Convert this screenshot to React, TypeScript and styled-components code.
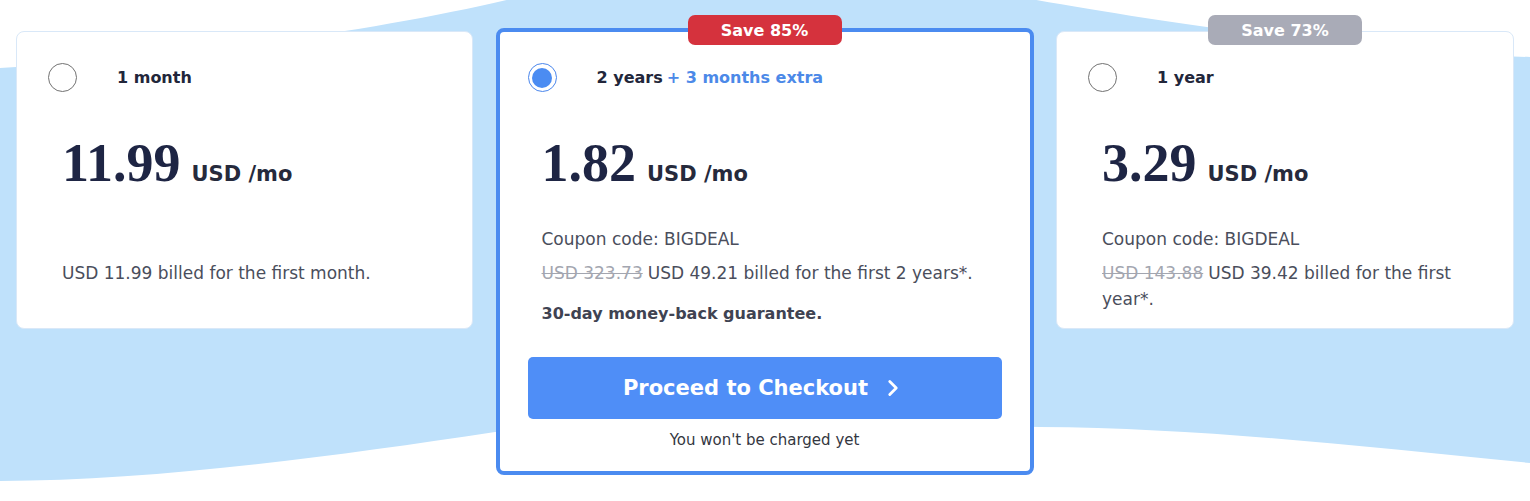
import React from 'react';
import styled, { createGlobalStyle } from 'styled-components';
import { ChevronRight } from 'lucide-react';

const SANS = `"DejaVu Sans", "Noto Sans", Arial, sans-serif`;
const SERIF = `"Liberation Serif", "DejaVu Serif", serif`;

const GlobalStyle = createGlobalStyle`
    * {
        box-sizing: border-box;
    }
    body {
        margin: 0;
        background: #ffffff;
        font-family: ${SANS};
        color: #222639;
    }
`;

const Page = styled.div`
    position: relative;
    width: 1530px;
    height: 501px;
    overflow: hidden;
    background: #ffffff;
`;

const Blob = styled.svg`
    position: absolute;
    left: 0;
    top: 0;
    width: 1530px;
    height: 501px;
    z-index: 0;
`;

const Plans = styled.div`
    position: relative;
    z-index: 1;
    display: flex;
    align-items: flex-start;
    justify-content: space-between;
    padding: 28px 16px 0;
`;

const Card = styled.div<{ $selected?: boolean; $width: number }>`
    position: relative;
    width: ${p => p.$width}px;
    height: ${p => (p.$selected ? 'auto' : '298px')};
    margin-top: ${p => (p.$selected ? '0' : '3px')};
    background: #ffffff;
    border: ${p => (p.$selected ? '4px solid #4b8bf0' : '1px solid #d9e8f8')};
    border-radius: 8px;
    padding: 31px ${p => (p.$selected ? '42px' : '45px')} 21px;
`;

const Badge = styled.div<{ $tone: 'red' | 'gray' }>`
    position: absolute;
    top: -17px;
    left: 50%;
    transform: translateX(-50%);
    width: 154px;
    height: 30px;
    border-radius: 7px;
    background: ${p => (p.$tone === 'red' ? '#d5323d' : '#a9abb7')};
    color: #ffffff;
    font-size: 16px;
    font-weight: 700;
    display: flex;
    align-items: center;
    justify-content: center;
`;

const Header = styled.label`
    display: flex;
    align-items: center;
    gap: 40px;
    margin-left: -14px;
    height: 29px;
    font-size: 16px;
    font-weight: 700;
    color: #22263a;
    cursor: pointer;
`;

const Radio = styled.span<{ $checked?: boolean }>`
    flex: none;
    width: 29px;
    height: 29px;
    border-radius: 50%;
    border: ${p => (p.$checked ? '1.5px solid #4a86ec' : '1px solid #727272')};
    display: flex;
    align-items: center;
    justify-content: center;
    &::after {
        content: '';
        display: ${p => (p.$checked ? 'block' : 'none')};
        width: 20px;
        height: 20px;
        border-radius: 50%;
        background: #4b8cf2;
    }
`;

const Extra = styled.span`
    color: #4c89e8;
    margin-left: 4px;
`;

const PriceRow = styled.div`
    display: flex;
    align-items: baseline;
    gap: 11px;
    margin-top: 44px;
    line-height: 54px;
`;

const Amount = styled.span`
    font-family: ${SERIF};
    font-size: 54px;
    font-weight: 700;
    color: #1e2544;
`;

const Unit = styled.span`
    font-size: 21px;
    font-weight: 700;
    color: #262a3c;
`;

const Details = styled.div`
    display: flex;
    flex-direction: column;
    gap: 8px;
    margin-top: 25px;
    font-size: 17px;
    line-height: 26px;
    color: #4a4e5c;
`;

const Line = styled.p<{ $hidden?: boolean }>`
    margin: 0;
    visibility: ${p => (p.$hidden ? 'hidden' : 'visible')};
`;

const OldPrice = styled.s`
    color: #a3a6b0;
    margin-right: 5px;
`;

const Guarantee = styled.p`
    margin: 7px 0 0;
    font-size: 16px;
    font-weight: 700;
    color: #3f4352;
`;

const CheckoutButton = styled.button`
    display: flex;
    align-items: center;
    justify-content: center;
    gap: 12px;
    width: calc(100% + 28px);
    height: 62px;
    margin: 30px 0 0 -14px;
    border: none;
    border-radius: 5px;
    background: #4f8ef7;
    color: #ffffff;
    font-family: ${SANS};
    font-size: 21px;
    font-weight: 700;
    cursor: pointer;
`;

const Note = styled.p`
    margin: 11px 0 0;
    text-align: center;
    font-size: 15px;
    line-height: 20px;
    color: #34373f;
`;

type Plan = {
    id: string;
    width: number;
    title: string;
    extra?: string;
    amount: string;
    badge?: { text: string; tone: 'red' | 'gray' };
    coupon?: string;
    oldPrice?: string;
    billed: string;
    selected?: boolean;
};

const plans: Plan[] = [
    {
        id: 'monthly',
        width: 457,
        title: '1 month',
        amount: '11.99',
        billed: 'USD 11.99 billed for the first month.',
    },
    {
        id: 'two-years',
        width: 538,
        title: '2 years',
        extra: '+ 3 months extra',
        amount: '1.82',
        badge: { text: 'Save 85%', tone: 'red' },
        coupon: 'BIGDEAL',
        oldPrice: 'USD 323.73',
        billed: 'USD 49.21 billed for the first 2 years*.',
        selected: true,
    },
    {
        id: 'yearly',
        width: 458,
        title: '1 year',
        amount: '3.29',
        badge: { text: 'Save 73%', tone: 'gray' },
        coupon: 'BIGDEAL',
        oldPrice: 'USD 143.88',
        billed: 'USD 39.42 billed for the first year*.',
    },
];

const PlanCard = ({ plan }: { plan: Plan }) => (
    <Card $selected={plan.selected} $width={plan.width}>
        {plan.badge && <Badge $tone={plan.badge.tone}>{plan.badge.text}</Badge>}
        <Header>
            <Radio $checked={plan.selected} />
            <span>
                {plan.title}
                {plan.extra && <Extra>{plan.extra}</Extra>}
            </span>
        </Header>
        <PriceRow>
            <Amount>{plan.amount}</Amount>
            <Unit>USD /mo</Unit>
        </PriceRow>
        <Details>
            <Line $hidden={!plan.coupon}>Coupon code: {plan.coupon ?? 'BIGDEAL'}</Line>
            <Line>
                {plan.oldPrice && <OldPrice>{plan.oldPrice}</OldPrice>}
                {plan.billed}
            </Line>
            {plan.selected && <Guarantee>30-day money-back guarantee.</Guarantee>}
        </Details>
        {plan.selected && (
            <>
                <CheckoutButton>
                    Proceed to Checkout
                    <ChevronRight size={26} strokeWidth={2.6} />
                </CheckoutButton>
                <Note>You won't be charged yet</Note>
            </>
        )}
    </Card>
);

const App = () => {
    return (
        <Page>
            <GlobalStyle />
            <Blob viewBox="0 0 1530 501" preserveAspectRatio="none">
                <path
                    fill="#bfe1fb"
                    d="M0,68 C190,58 390,28 515,-2 L1025,-2 C1150,20 1350,52 1530,57 L1530,463 C1360,446 1200,428 1040,427 C860,420 640,424 495,432 C330,457 150,481 0,481 Z"
                />
            </Blob>
            <Plans>
                {plans.map(plan => (
                    <PlanCard key={plan.id} plan={plan} />
                ))}
            </Plans>
        </Page>
    );
};

export default App;
